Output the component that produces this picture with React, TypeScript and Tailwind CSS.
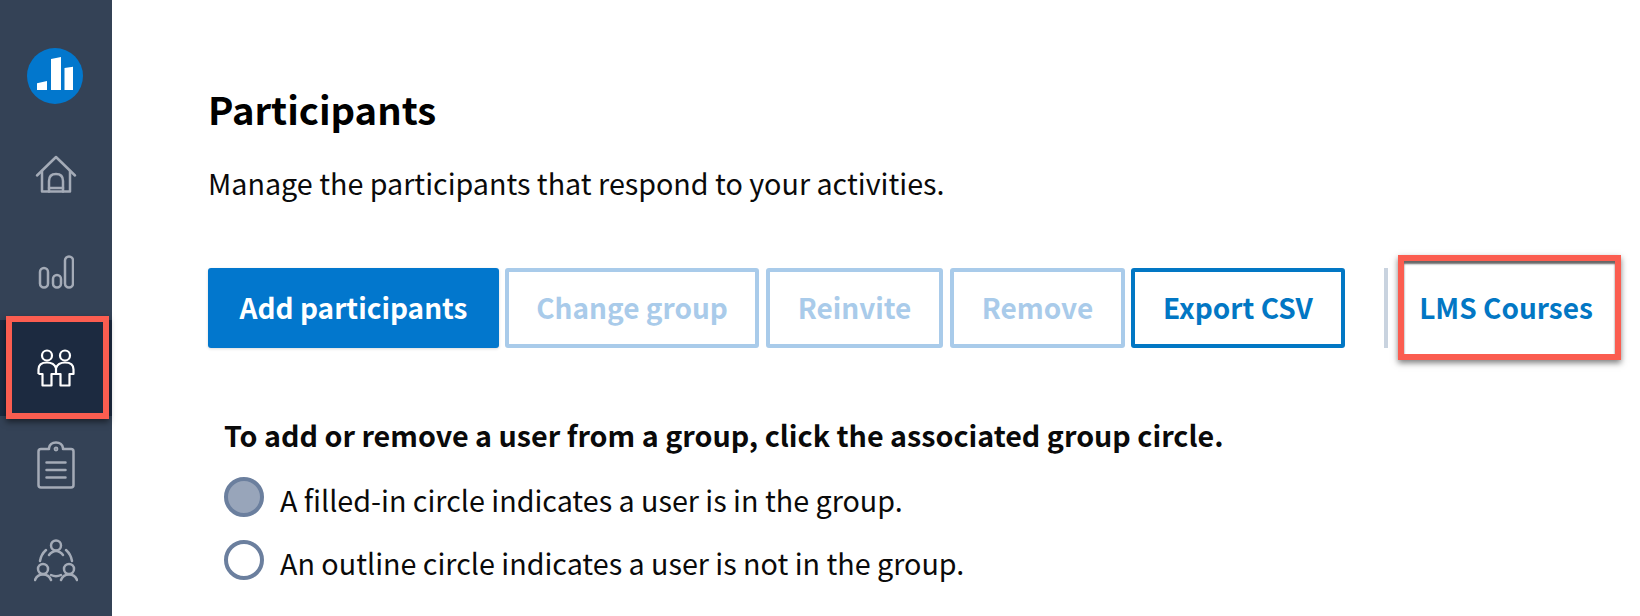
const font = { fontFamily: '"Noto Sans CJK SC", "Noto Sans", sans-serif' };

function Logo() {
  return (
    <svg width="56" height="56" viewBox="0 0 56 56">
      <circle cx="28" cy="28" r="28" fill="#0277cd" />
      <path d="M10 35.300 L20 33 V42 H10 Z M24 11 L34 9 V42 H24 Z M37.500 20 L46 18.700 V42 H37.500 Z" fill="#fff" />
    </svg>
  );
}

function Home() {
  return (
    <svg width="42" height="38" viewBox="0 0 42 38" fill="none" stroke="#a4abb7" strokeWidth="2.500" strokeLinejoin="round" strokeLinecap="round">
      <path d="M2 20.500 L21 2 L40 20.500" />
      <path d="M7 16 V36.500 H35 V16" />
      <path d="M14 36.500 V26 Q14 19 21 19 Q28 19 28 26 V36.500" />
      <path d="M14 33 H28" />
    </svg>
  );
}

function Bars() {
  return (
    <svg width="36" height="34" viewBox="0 0 36 34" fill="none" stroke="#a4abb7" strokeWidth="2.500">
      <rect x="2" y="13" width="8" height="19.500" rx="4" />
      <rect x="15" y="20" width="8" height="12.500" rx="4" />
      <rect x="27" y="1.500" width="8" height="31" rx="4" />
    </svg>
  );
}

function People() {
  return (
    <svg width="40" height="38" viewBox="0 0 40 38" fill="none" stroke="#fff" strokeWidth="2.200" strokeLinejoin="round">
      <circle cx="11" cy="6.500" r="5" />
      <circle cx="29" cy="6.500" r="5" />
      <path d="M2.500 25 V20.500 Q2.500 13.500 11 13.500 Q18 13.500 20 19 Q22 13.500 29 13.500 Q37.500 13.500 37.500 20.500 V25 H33.500 V36.500 H24.500 V25 H20 V19 M20 25 H15.500 V36.500 H6.500 V25 H2.500" />
    </svg>
  );
}

function Clipboard() {
  return (
    <svg width="38" height="48" viewBox="0 0 38 48" fill="none" stroke="#a4abb7" strokeWidth="2.500" strokeLinejoin="round" strokeLinecap="round">
      <path d="M12 8 H4 Q1.500 8 1.500 10.500 V44 Q1.500 46.500 4 46.500 H34 Q36.500 46.500 36.500 44 V10.500 Q36.500 8 34 8 H26 V7 Q25 1.500 19 1.500 Q13 1.500 12 7 Z" />
      <circle cx="19" cy="8" r="1.500" strokeWidth="1.800" />
      <path d="M9.500 21.500 H28.500 M9.500 29 H28.500 M9.500 36.500 H28.500" />
    </svg>
  );
}

function Team() {
  return (
    <svg width="44" height="44" viewBox="0 0 44 44" fill="none" stroke="#a4abb7" strokeWidth="2.500" strokeLinecap="round">
      <circle cx="22" cy="6.500" r="5" />
      <path d="M15 16 Q18 12 22 12 Q26 12 29 16" />
      <circle cx="9" cy="30" r="5" />
      <path d="M1 41 Q3 35.500 9 35.500 Q15 35.500 17 41" />
      <circle cx="35" cy="30" r="5" />
      <path d="M27 41 Q29 35.500 35 35.500 Q41 35.500 43 41" />
      <path d="M6 22 Q7 15.500 12 11 M32 11 Q37 15.500 38 22 M17 36 Q22 38.500 27 36" />
    </svg>
  );
}

function OutlineBtn({ label, width, dim }: { label: string; width: string; dim?: boolean }) {
  return (
    <button className={`${width} h-[80px] pb-[2px] rounded-[3px] border-[4px] bg-white text-[28px] font-semibold flex items-center justify-center ${dim ? "border-[#a9cbea] text-[#a9cbea]" : "border-[#0277c4] text-[#0277c4]"}`}>
      {label}
    </button>
  );
}

export default function App() {
  return (
    <div className="w-[1640px] h-[616px] overflow-hidden flex bg-white text-[#0a0a0a]" style={font}>
      <aside className="relative w-[112px] h-full bg-[#344256] flex flex-col shrink-0">
        <div className="h-[128px] pt-[48px] pl-[27px]"><Logo /></div>
        <div className="h-[92px] flex items-center justify-center"><Home /></div>
        <div className="h-[100px] flex items-start justify-center pt-[35px]"><Bars /></div>
        <div className="h-[96px] flex items-center justify-center bg-[#1c2a40]"><People /></div>
        <div className="h-[97px] flex items-center justify-center"><Clipboard /></div>
        <div className="h-[96px] flex items-center justify-center"><Team /></div>
        <div className="absolute left-[6px] top-[316px] w-[103px] h-[103px] border-[6px] border-[#fb5d50] shadow-[0_3px_6px_rgba(0,0,0,0.5)]" />
      </aside>
      <main className="flex-1 pl-[96px] pt-[84px]">
        <h1 className="text-[38.2px] leading-[50px] font-semibold text-black">Participants</h1>
        <p className="mt-[29px] text-[28.7px] leading-[40px]">Manage the participants that respond to your activities.</p>
        <div className="mt-[52px] flex items-center">
          <button className="w-[291px] h-[80px] pb-[2px] rounded-[3px] bg-[#0277cd] text-white text-[28px] font-semibold shadow-[0_1px_3px_rgba(0,0,0,0.15)]">Add participants</button>
          <div className="ml-[6px] flex gap-[7px]">
            <OutlineBtn label="Change group" width="w-[254px]" dim />
            <OutlineBtn label="Reinvite" width="w-[177px]" dim />
            <OutlineBtn label="Remove" width="w-[175px]" dim />
          </div>
          <div className="ml-[6px]"><OutlineBtn label="Export CSV" width="w-[214px]" /></div>
          <div className="ml-[39px] w-[4px] h-[80px] bg-[#c9d3df]" />
          <div className="ml-[10px] relative w-[223px] h-[105px] pr-[7px] pb-[2px] flex items-center justify-center bg-white border-[6px] border-[#fb5d50] shadow-[0_3px_6px_rgba(0,0,0,0.5),inset_0_3px_2px_rgba(0,0,0,0.6)] text-[28px] font-semibold text-[#0277c4]">
            LMS Courses
          </div>
        </div>
        <p className="mt-[55px] ml-[16px] text-[28.7px] leading-[40px] font-bold">To add or remove a user from a group, click the associated group circle.</p>
        <div className="mt-[18px] ml-[16px] flex items-center gap-[16px] h-[48px]">
          <span className="w-[40px] h-[40px] rounded-full bg-[#98a5ba] border-[4px] border-[#6b7f9e]" />
          <span className="text-[28.7px] pt-[6px]">A filled-in circle indicates a user is in the group.</span>
        </div>
        <div className="mt-[15px] ml-[16px] flex items-center gap-[16px] h-[48px]">
          <span className="w-[40px] h-[40px] rounded-full bg-white border-[4px] border-[#6b7f9e]" />
          <span className="text-[28.7px] pt-[6px]">An outline circle indicates a user is not in the group.</span>
        </div>
      </main>
    </div>
  );
}
